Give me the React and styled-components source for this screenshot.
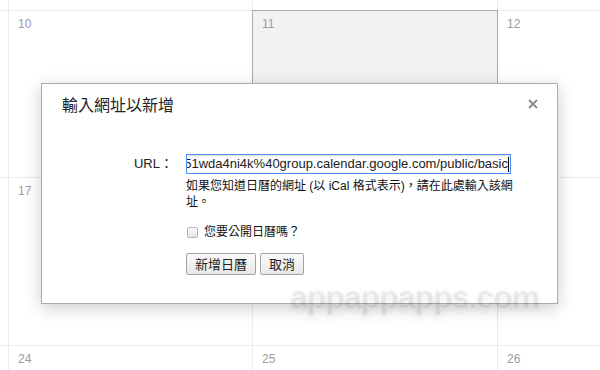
import React from "react";
import styled, { createGlobalStyle } from "styled-components";

const GlobalStyle = createGlobalStyle`
  html, body {
    margin: 0;
    padding: 0;
    background: #fff;
    overflow: hidden;
  }
  body {
    font-family: "Liberation Sans", Arial, "Noto Sans CJK TC", sans-serif;
    color: #222;
  }
`;

const weeks = [
  { height: "10px", days: [null, null, null, null] },
  { height: "167px", days: [null, 10, 11, 12] },
  { height: "168px", days: [null, 17, 18, 19] },
  { height: "auto", days: [null, 24, 25, 26] },
];

const TODAY = 11;

export default function App() {
  return (
    <Page>
      <GlobalStyle />
      <Calendar>
        {weeks.map((week, w) =>
          week.days.map((day, d) => (
            <Cell
              key={`${w}-${d}`}
              $top={w === 0}
              $edge={d === 0}
              $today={day === TODAY}
            >
              {day && <DayNum>{day}</DayNum>}
            </Cell>
          ))
        )}
      </Calendar>

      <Dialog>
        <Header>
          <Title>輸入網址以新增</Title>
          <Close aria-label="close">
            <svg width="10" height="10" viewBox="0 0 10 10">
              <path d="M1 1 L9 9 M9 1 L1 9" stroke="#8c8c8c" strokeWidth="2" />
            </svg>
          </Close>
        </Header>

        <Form>
          <Label>URL：</Label>
          <Controls>
            <UrlBox>
              <UrlText>
                https://www.google.com/calendar/ical/0lq2n51wda4ni4k%40group.calendar.google.com/public/basic
              </UrlText>
              <Caret />
            </UrlBox>
            <Help>
              如果您知道日曆的網址 (以 iCal 格式表示)，請在此處輸入該網址。
            </Help>
            <CheckRow>
              <Check type="checkbox" />
              <span>您要公開日曆嗎？</span>
            </CheckRow>
            <Buttons>
              <Button>新增日曆</Button>
              <Button>取消</Button>
            </Buttons>
          </Controls>
        </Form>
      </Dialog>

      <Watermark>appappapps.com</Watermark>
    </Page>
  );
}

const Page = styled.div`
  position: relative;
  width: 600px;
  height: 370px;
  overflow: hidden;
  background: #fff;
`;

const Calendar = styled.div`
  display: grid;
  grid-template-columns: 8px 244px 245px 245px;
  grid-template-rows: 10px 167px 168px 1fr;
  height: 370px;
`;

const Cell = styled.div`
  box-sizing: border-box;
  position: relative;
  padding: 6px 0 0 9px;
  border-left: ${(p) => (p.$edge ? "none" : "1px solid #ebebeb")};
  border-top: ${(p) => (p.$top ? "none" : "1px solid #ebebeb")};
  background: ${(p) => (p.$today ? "#f2f2f2" : "transparent")};
  ${(p) =>
    p.$today &&
    `
    border-left-color: #acacac;
    border-top-color: #acacac;
    box-shadow: 1px 0 0 #acacac;
    z-index: 1;
  `}
`;

const DayNum = styled.div`
  font-size: 12px;
  line-height: 14px;
  color: #9a9a9f;
`;

const Dialog = styled.div`
  position: absolute;
  left: 41px;
  top: 83px;
  width: 517px;
  height: 221px;
  box-sizing: border-box;
  padding: 10px 19px 0 20px;
  background: #fff;
  border: 1px solid #acacac;
  box-shadow: 0 4px 16px rgba(0, 0, 0, 0.2);
  z-index: 2;
`;

const Header = styled.div`
  display: flex;
  align-items: center;
  justify-content: space-between;
`;

const Title = styled.div`
  font-family: "Noto Sans CJK TC", sans-serif;
  font-size: 16px;
  line-height: 20px;
  color: #222;
`;

const Close = styled.div`
  display: flex;
  width: 10px;
  height: 10px;
  cursor: pointer;
`;

const Form = styled.div`
  display: grid;
  grid-template-columns: 111px 325px;
  column-gap: 13px;
  margin-top: 40px;
`;

const Label = styled.div`
  text-align: right;
  font-size: 13px;
  line-height: 20px;
  color: #222;
`;

const Controls = styled.div`
  display: flex;
  flex-direction: column;
  align-items: flex-start;
`;

const UrlBox = styled.div`
  box-sizing: border-box;
  display: flex;
  justify-content: flex-end;
  align-items: center;
  width: 325px;
  height: 20px;
  padding: 0 1px;
  overflow: hidden;
  border: 1px solid #4d90fe;
  box-shadow: inset 0 1px 2px rgba(0, 0, 0, 0.15);
  background: #fff;
`;

const UrlText = styled.span`
  white-space: nowrap;
  font-size: 13px;
  line-height: 18px;
  color: #222;
`;

const Caret = styled.span`
  flex: none;
  width: 1px;
  height: 15px;
  background: #000;
`;

const Help = styled.div`
  width: 332px;
  margin-top: 4px;
  font-size: 12px;
  line-height: 16px;
  color: #111;
`;

const CheckRow = styled.label`
  display: flex;
  align-items: center;
  gap: 6px;
  margin-top: 14px;
  font-size: 12px;
  line-height: 16px;
  color: #111;
`;

const Check = styled.input`
  appearance: none;
  margin: 0 0 0 1px;
  width: 11px;
  height: 11px;
  border: 1px solid #b5b5b5;
  border-radius: 2px;
  background: linear-gradient(#fafafa, #e6e6e6);
`;

const Buttons = styled.div`
  display: flex;
  gap: 4px;
  margin-top: 13px;
`;

const Button = styled.button`
  height: 22px;
  padding: 0 8px;
  font-family: "Noto Sans CJK TC", sans-serif;
  font-size: 13px;
  line-height: 20px;
  color: #222;
  background: linear-gradient(#fbfbfb, #e8e8e8);
  border: 1px solid #a3a3a3;
  border-radius: 2px;
`;

const Watermark = styled.div`
  position: absolute;
  left: 290px;
  top: 279px;
  z-index: 3;
  font-family: "Liberation Sans", Arial, sans-serif;
  font-weight: 700;
  font-size: 32px;
  letter-spacing: -1px;
  color: rgba(0, 0, 0, 0.07);
  text-shadow: 0 3px 6px rgba(0, 0, 0, 0.08);
  pointer-events: none;
`;
